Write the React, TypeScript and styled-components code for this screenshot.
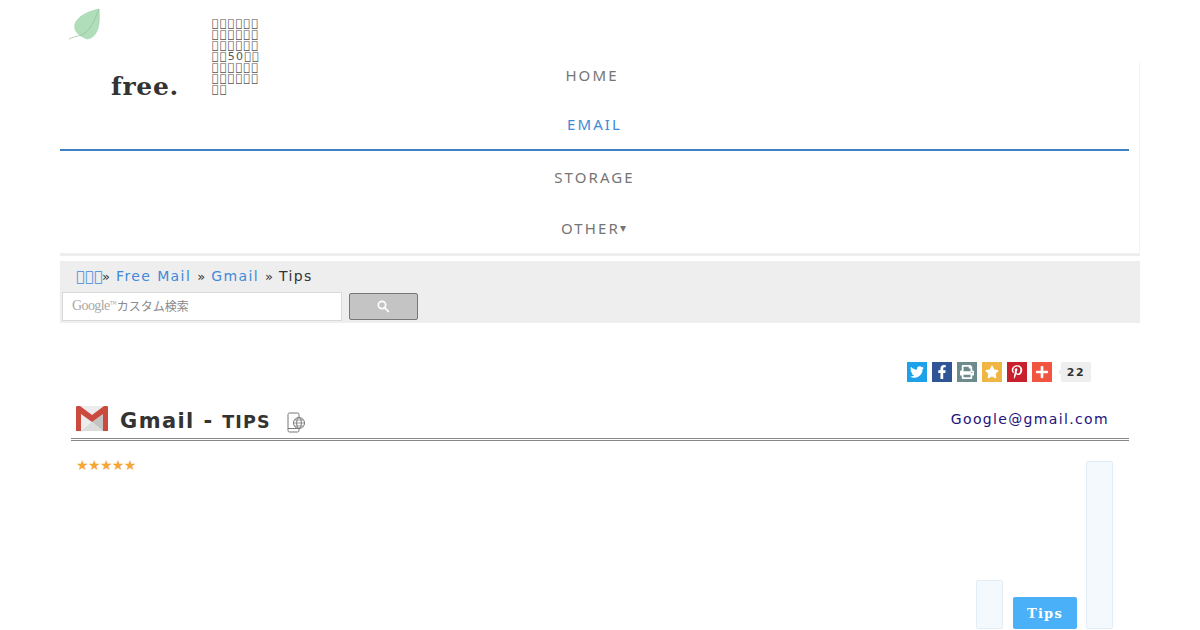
import React from 'react';
import styled, { createGlobalStyle } from 'styled-components';
import { FaTwitter, FaFacebookF, FaPinterestP, FaPlus, FaStar, FaPrint } from 'react-icons/fa';

// U+E000 has no glyph in any installed font, which gives the same empty boxes as the reference
const tofu = (n: number) => '\uE000'.repeat(n);

const GlobalStyle = createGlobalStyle`
  html, body {
    margin: 0;
    height: 630px;
    overflow: hidden;
    background: #fff;
    font-family: "DejaVu Sans", sans-serif;
    color: #333;
  }
`;

const Page = styled.div`
  width: 1080px;
  margin-left: 60px;
`;

const Brand = styled.header`
  display: flex;
  height: 96px;
  margin-bottom: -34px;
  position: relative;
  z-index: 1;
  pointer-events: none;
`;

const LogoBox = styled.div`
  width: 152px;
  padding: 8px 0 0 9px;
  box-sizing: border-box;
  display: flex;
  flex-direction: column;
`;

const LeafMark = styled.svg`
  flex-shrink: 0;
`;

const LogoName = styled.div`
  font-family: "DejaVu Serif", serif;
  font-weight: bold;
  font-size: 25px;
  line-height: 30px;
  letter-spacing: 0.7px;
  color: #333;
  margin: 31px 0 0 42px;
`;

const Tagline = styled.div`
  margin: 18px 0 0;
  width: 60px;
  font-size: 11px;
  line-height: 11px;
  letter-spacing: 1.3px;
  color: #555;
`;

const TaglineLine = styled.div`
  white-space: nowrap;
`;

const Nav = styled.nav`
  width: 1080px;
  border-right: 1px solid #f4f4f4;
  border-bottom: 3px solid #eee;
  box-sizing: border-box;
  height: 194px;
`;

const NavItem = styled.a<{ $active?: boolean; $h: number; $shift?: number; $pb: number }>`
  display: flex;
  align-items: center;
  justify-content: center;
  width: 1069px;
  height: ${(p) => p.$h}px;
  box-sizing: border-box;
  padding-right: ${(p) => p.$shift ?? 0}px;
  padding-bottom: ${(p) => p.$pb}px;
  font-family: "Noto Sans", sans-serif;
  font-size: 15px;
  letter-spacing: 2.1px;
  color: ${(p) => (p.$active ? '#3f8ad8' : '#757575')};
  border-bottom: ${(p) => (p.$active ? '2px solid #4080c4' : 'none')};
`;

const Caret = styled.span`
  font-size: 12px;
  margin-left: 0;
`;

const Crumbs = styled.div`
  margin-top: 5px;
  height: 62px;
  background: #eee;
  box-sizing: border-box;
  padding: 7px 0 0 2px;
`;

const CrumbRow = styled.div`
  display: flex;
  align-items: center;
  height: 16px;
  padding-left: 14px;
  font-size: 14px;
  letter-spacing: 1.4px;
  color: #333;
  white-space: pre;
`;

const CrumbLink = styled.a`
  color: #3f8ad8;
`;

const CrumbHome = styled(CrumbLink)`
  width: 20px;
  letter-spacing: 0.6px;
`;

const CrumbSep = styled.span`
  letter-spacing: 0;
  font-size: 13px;
  padding: 0 6px;
`;

const SearchRow = styled.div`
  display: flex;
  align-items: center;
  gap: 7px;
  margin-top: 8px;
`;

const SearchBox = styled.div`
  width: 280px;
  height: 29px;
  background: #fff;
  border: 1px solid #d9d9d9;
  box-sizing: border-box;
  display: flex;
  align-items: center;
  padding: 0 0 2px 9px;
  color: #8a8a8a;
  font-size: 12px;
  font-family: "Noto Sans CJK JP", sans-serif;
`;

const GoogleMark = styled.span`
  font-family: "Liberation Serif", serif;
  font-size: 14px;
  color: #a8a8a8;
  letter-spacing: -0.6px;
`;

const TmMark = styled.span`
  font-size: 5px;
  color: #a8a8a8;
  margin: -6px 0 0 0;
`;

const SearchButton = styled.button`
  width: 69px;
  height: 27px;
  padding: 0;
  background: #c4c4c4;
  border: 1px solid #777;
  border-radius: 2px;
  display: flex;
  align-items: center;
  justify-content: center;
`;

const ShareRow = styled.div`
  display: flex;
  align-items: center;
  gap: 5px;
  margin: 39px 49px 0 0;
  justify-content: flex-end;
`;

const ShareButton = styled.a<{ $bg: string }>`
  width: 20px;
  height: 20px;
  background: ${(p) => p.$bg};
  color: #fff;
  display: flex;
  align-items: center;
  justify-content: center;
  font-size: 14px;
`;

const ShareCount = styled.span`
  width: 30px;
  height: 20px;
  margin-left: 4px;
  background: #eee;
  border-radius: 2px;
  font-size: 11px;
  font-weight: bold;
  letter-spacing: 1.5px;
  color: #333;
  display: flex;
  align-items: center;
  justify-content: center;
  position: relative;
  &::before {
    content: '';
    position: absolute;
    left: -3px;
    top: 7px;
    border-style: solid;
    border-width: 3px 3px 3px 0;
    border-color: transparent #eee transparent transparent;
  }
`;

const TitleBar = styled.div`
  width: 1058px;
  margin: 23px 0 0 11px;
  height: 36px;
  box-sizing: border-box;
  padding: 0 20px 6px 5px;
  border-bottom: 3px double #888;
  display: flex;
  align-items: center;
`;

const Title = styled.h1`
  margin: 5px 0 0 12px;
  font-size: 21px;
  font-weight: bold;
  letter-spacing: 1.4px;
  color: #333;
`;

const TitleSub = styled.span`
  font-size: 17.5px;
  letter-spacing: 1.2px;
`;

const DeviceWrap = styled.span`
  margin: 8px 0 0 16px;
  display: flex;
`;

const Mail = styled.a`
  margin: 0 0 0 auto;
  font-size: 14px;
  letter-spacing: 1.35px;
  color: #23127a;
`;

const Body = styled.div`
  margin: 20px 27px 0 16px;
  display: flex;
  align-items: flex-end;
  height: 168px;
`;

const Stars = styled.div`
  align-self: flex-start;
  font-size: 14px;
  color: #f5a733;
  line-height: 10px;
  margin: -1px auto 0 0;
  letter-spacing: -0.6px;
`;

const Tab = styled.div<{ $h: number; $mr: number }>`
  width: 27px;
  height: ${(p) => p.$h}px;
  margin-right: ${(p) => p.$mr}px;
  box-sizing: border-box;
  background: #f4f9fd;
  border: 1px solid #e2edf6;
  border-radius: 2px;
`;

const TipsButton = styled.a`
  width: 64px;
  height: 32px;
  margin-right: 9px;
  background: #4ab0f7;
  border-radius: 2px;
  color: #fff;
  font-family: "DejaVu Serif", serif;
  font-weight: bold;
  font-size: 13px;
  letter-spacing: 1.2px;
  display: flex;
  align-items: center;
  justify-content: center;
`;

const Leaf = () => (
  <LeafMark width="34" height="33" viewBox="0 0 34 33">
    <path d="M30 1 C21 3 9 7 6 16 C4 23 10 28 18 31 C27 30 32 20 30 1 Z" fill="#b0deb8" stroke="#9cccaa" strokeWidth="0.5" />
    <path d="M0 31 C8 27 14 29 20 21 C25 15 27 8 30 1" fill="none" stroke="#92bea0" strokeWidth="0.7" />
  </LeafMark>
);

const GmailIcon = () => (
  <svg width="32" height="25" viewBox="0 0 32 25">
    <rect x="0" y="0" width="32" height="25" rx="1" fill="#ececec" />
    <path d="M16 16 L27 25 L27 8 Z" fill="#c4c4c4" />
    <path d="M5 25 L16 16 L27 25 Z" fill="#dcdcdc" />
    <path d="M0 1 C0 0 1 0 2 0 L4 0 L16 9 L28 0 L30 0 C31 0 32 0 32 1 L32 25 L27 25 L27 8 L16 16 L5 8 L5 25 L0 25 Z" fill="#cb4a3e" />
  </svg>
);

const DeviceIcon = () => (
  <svg width="18" height="21" viewBox="0 0 18 21" fill="none" stroke="#777" strokeWidth="1">
    <rect x="1" y="1" width="11" height="19" rx="1.5" />
    <path d="M1 16.5 H12" />
    <circle cx="12" cy="11" r="5.5" fill="#fff" />
    <ellipse cx="12" cy="11" rx="2.3" ry="5.5" />
    <path d="M6.5 11 H17.5 M7.5 8 H16.5 M7.5 14 H16.5" strokeWidth="0.7" />
  </svg>
);

const SearchIcon = () => (
  <svg width="13" height="13" viewBox="0 0 13 13">
    <path d="M5 0.5 A4.5 4.5 0 1 0 5 9.5 A4.5 4.5 0 1 0 5 0.5 Z M5 2.2 A2.8 2.8 0 1 1 5 7.8 A2.8 2.8 0 1 1 5 2.2 Z" fill="#fff" fillRule="evenodd" />
    <path d="M8 7 L12.5 11.3 L11.2 12.6 L6.9 8.2 Z" fill="#fff" />
  </svg>
);

const App: React.FC = () => {
  return (
    <Page>
      <GlobalStyle />
      <Brand>
        <LogoBox>
          <Leaf />
          <LogoName>free.</LogoName>
        </LogoBox>
        <Tagline>
          <TaglineLine>{tofu(6)}</TaglineLine>
          <TaglineLine>{tofu(6)}</TaglineLine>
          <TaglineLine>{tofu(6)}</TaglineLine>
          <TaglineLine>{tofu(2)}50{tofu(2)}</TaglineLine>
          <TaglineLine>{tofu(6)}</TaglineLine>
          <TaglineLine>{tofu(6)}</TaglineLine>
          <TaglineLine>{tofu(2)}</TaglineLine>
        </Tagline>
      </Brand>
      <Nav>
        <NavItem $h={38} $shift={5} $pb={12}>HOME</NavItem>
        <NavItem $h={51} $active $pb={2}>EMAIL</NavItem>
        <NavItem $h={53} $pb={2}>STORAGE</NavItem>
        <NavItem $h={49} $pb={2}>OTHER<Caret>▾</Caret></NavItem>
      </Nav>
      <Crumbs>
        <CrumbRow>
          <CrumbHome>{tofu(3)}</CrumbHome>
          <CrumbSep>»</CrumbSep>
          <CrumbLink>Free Mail</CrumbLink>
          <CrumbSep>»</CrumbSep>
          <CrumbLink>Gmail</CrumbLink>
          <CrumbSep>»</CrumbSep>
          Tips
        </CrumbRow>
        <SearchRow>
          <SearchBox>
            <GoogleMark>Google</GoogleMark>
            <TmMark>TM</TmMark>
            カスタム検索
          </SearchBox>
          <SearchButton>
            <SearchIcon />
          </SearchButton>
        </SearchRow>
      </Crumbs>
      <ShareRow>
        <ShareButton $bg="#1da1e8"><FaTwitter /></ShareButton>
        <ShareButton $bg="#2f5597"><FaFacebookF /></ShareButton>
        <ShareButton $bg="#6d8a8c"><FaPrint /></ShareButton>
        <ShareButton $bg="#efb644"><FaStar /></ShareButton>
        <ShareButton $bg="#c8202c"><FaPinterestP /></ShareButton>
        <ShareButton $bg="#f2553f"><FaPlus /></ShareButton>
        <ShareCount>22</ShareCount>
      </ShareRow>
      <TitleBar>
        <GmailIcon />
        <Title>
          Gmail - <TitleSub>TIPS</TitleSub>
        </Title>
        <DeviceWrap>
          <DeviceIcon />
        </DeviceWrap>
        <Mail>Google@gmail.com</Mail>
      </TitleBar>
      <Body>
        <Stars>★★★★★</Stars>
        <Tab $h={49} $mr={10} />
        <TipsButton>Tips</TipsButton>
        <Tab $h={168} $mr={0} />
      </Body>
    </Page>
  );
};

export default App;
